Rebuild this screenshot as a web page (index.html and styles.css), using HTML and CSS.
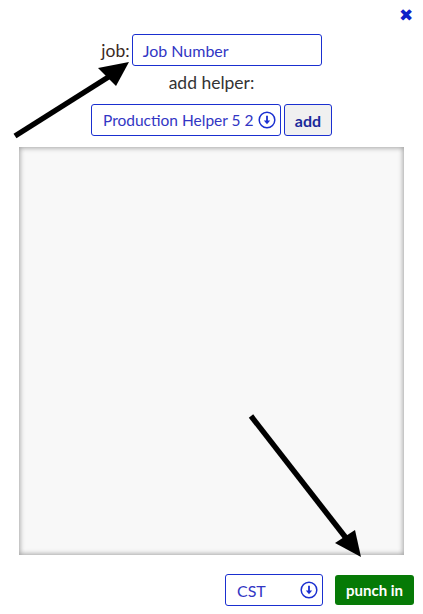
FILE: index.html
```html
<!DOCTYPE html>
<html>
<head>
<meta charset="utf-8">
<link rel="stylesheet" href="styles.css">
</head>
<body>
<div class="page">
  <div class="top-bar"><span class="close">✖</span></div>
  <div class="job-row">
    <label class="label">job:</label>
    <div class="field job-input">Job Number</div>
  </div>
  <div class="helper-label">add helper:</div>
  <div class="helper-row">
    <div class="field select helper-select">
      <span>Production Helper 5 2</span>
      <svg class="sel-icon" viewBox="0 0 18 18" width="18" height="18"><circle cx="9" cy="9" r="7.8" fill="none" stroke="#1a2fd0" stroke-width="1.5"/><path d="M9 4.8v6" stroke="#1a2fd0" stroke-width="1.8"/><path d="M5.8 9.6h6.4L9 13.2z" fill="#1a2fd0"/></svg>
    </div>
    <button class="btn add-btn">add</button>
  </div>
  <div class="panel"></div>
  <div class="bottom-row">
    <div class="field select tz-select">
      <span>CST</span>
      <svg class="sel-icon" viewBox="0 0 18 18" width="18" height="18"><circle cx="9" cy="9" r="7.8" fill="none" stroke="#1a2fd0" stroke-width="1.5"/><path d="M9 4.8v6" stroke="#1a2fd0" stroke-width="1.8"/><path d="M5.8 9.6h6.4L9 13.2z" fill="#1a2fd0"/></svg>
    </div>
    <button class="btn punch-btn">punch in</button>
  </div>
  <svg class="arrows" width="423" height="614" viewBox="0 0 423 614">
    <line x1="15" y1="136" x2="110" y2="76" stroke="#000" stroke-width="5.5"/>
    <polygon points="98,68 116,86 129,62" fill="#000"/>
    <line x1="251" y1="416" x2="346" y2="538" stroke="#000" stroke-width="5.5"/>
    <polygon points="335,543 355,530 361,557" fill="#000"/>
  </svg>
</div>
</body>
</html>
```
FILE: styles.css
```css
* { box-sizing: border-box; }
html, body { margin: 0; padding: 0; background: #fff; }
body { font-family: Lato, "Open Sans", sans-serif; color: #333; }
.page { position: relative; width: 423px; height: 614px; overflow: hidden; }
.top-bar { display: flex; justify-content: flex-end; height: 34px; padding: 5px 10px 0 0; }
.close { color: #1020c8; font-size: 17px; line-height: 20px; }
.job-row { display: flex; justify-content: center; align-items: center; gap: 2px; height: 32px; }
.label { font-size: 17.5px; color: #3b2a1e; }
.field { border: 1px solid #1a2fd0; border-radius: 3px; color: #3236c4; font-size: 16px; height: 32px; display: flex; align-items: center; background: #fff; }
.job-input { width: 190px; padding-left: 10px; }
.helper-label { text-align: center; font-size: 17.5px; line-height: 34px; height: 38px; }
.helper-row { display: flex; justify-content: center; gap: 3px; height: 32px; }
.select { justify-content: space-between; padding: 0 4px 0 11px; }
.helper-select { width: 190px; font-size: 15.5px; }
.btn { font-family: Lato, sans-serif; font-weight: bold; font-size: 16px; border-radius: 3px; height: 32px; padding: 0; }
.add-btn { width: 48px; background: #f0f0f0; border: 1px solid #1a2fd0; color: #1a2a9a; }
.panel { margin: 11px 19px 0 19px; height: 408px; background: #f8f8f8; box-shadow: inset 0 0 5px 1px rgba(0,0,0,0.35); }
.bottom-row { display: flex; justify-content: flex-end; align-items: center; gap: 12px; margin-top: 19px; padding-right: 9px; }
.tz-select { width: 98px; }
.punch-btn { width: 79px; height: 30px; background: #067a06; border: none; color: #fff; font-size: 15px; }
.arrows { position: absolute; left: 0; top: 0; pointer-events: none; }
```
